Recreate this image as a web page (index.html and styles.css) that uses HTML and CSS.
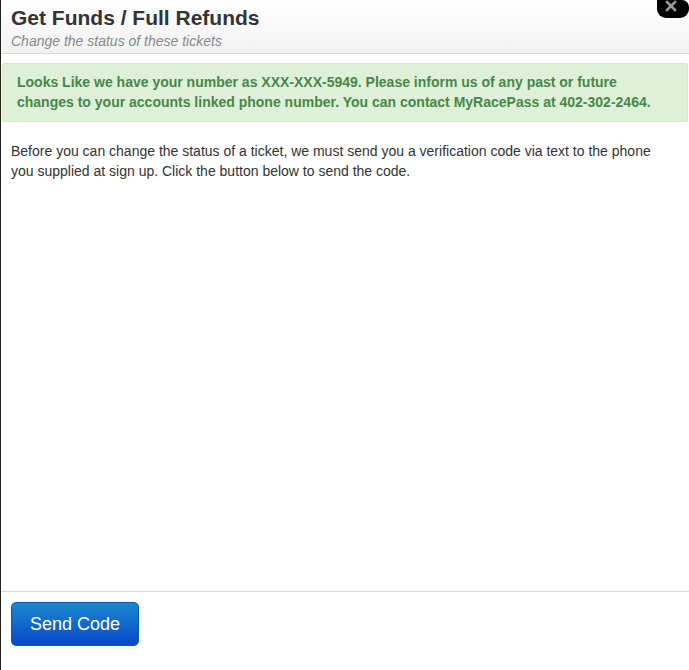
FILE: index.html
```html
<!DOCTYPE html>
<html lang="en">
<head>
    <meta charset="UTF-8">
    <title>Get Funds / Full Refunds</title>
    <link rel="stylesheet" href="styles.css">
</head>
<body>
    <div class="modal">
        <button class="close-btn" aria-label="Close">
            <svg width="32" height="18" viewBox="0 0 32 18">
                <path d="M10 2 L18 10 M18 2 L10 10" stroke="#9a9a9a" stroke-width="2.6" stroke-linecap="square"/>
            </svg>
        </button>
        <header class="modal-header">
            <h3>Get Funds / Full Refunds</h3>
            <p class="subtitle">Change the status of these tickets</p>
        </header>
        <div class="alert-success">
            Looks Like we have your number as XXX-XXX-5949. Please inform us of any past or future changes to your accounts linked phone number. You can contact MyRacePass at 402-302-2464.
        </div>
        <div class="modal-body">
            <p>Before you can change the status of a ticket, we must send you a verification code via text to the phone you supplied at sign up. Click the button below to send the code.</p>
        </div>
        <footer class="modal-footer">
            <button class="btn-primary">Send Code</button>
        </footer>
    </div>
</body>
</html>
```

FILE: styles.css
```css
body {
    margin: 0;
    padding: 0;
    font-family: "Liberation Sans", Arial, sans-serif;
    background-color: #fff;
    overflow: hidden;
}

.modal {
    position: relative;
    height: 670px;
    border-left: 1px solid #222;
    display: flex;
    flex-direction: column;
    box-sizing: border-box;
}

.close-btn {
    position: absolute;
    top: 0;
    right: 0;
    width: 32px;
    height: 18px;
    padding: 0;
    border: none;
    border-radius: 0 7px 9px 9px;
    background-color: #000;
    cursor: pointer;
}

.close-btn svg {
    display: block;
}

.modal-header {
    padding: 6px 10px 0 10px;
    height: 54px;
    box-sizing: border-box;
    background: linear-gradient(#ffffff, #f2f2f2);
    border-bottom: 1px solid #d8d8d8;
}

.modal-header h3 {
    margin: 0;
    font-size: 21px;
    line-height: 24px;
    color: #333;
}

.subtitle {
    margin: 3px 0 0 0;
    font-size: 14px;
    font-style: italic;
    color: #888;
}

.alert-success {
    margin: 9px 1px 0 1px;
    padding: 8px 14px 9px 14px;
    background-color: #dff0d8;
    border: 1px solid #d6e9c6;
    border-radius: 2px;
    color: #468847;
    font-size: 14px;
    font-weight: bold;
    line-height: 20px;
}

.modal-body {
    flex-grow: 1;
    padding: 19px 30px 18px 10px;
}

.modal-body p {
    margin: 0;
    font-size: 14px;
    line-height: 20px;
    color: #333;
}

.modal-footer {
    border-top: 1px solid #d8d8d8;
    padding: 10px 10px 24px 10px;
}

.btn-primary {
    width: 128px;
    height: 44px;
    border: 1px solid #0a55b8;
    border-radius: 5px;
    background: linear-gradient(#1a88d0, #0848c8);
    color: #fff;
    font-size: 18px;
    font-family: "Liberation Sans", Arial, sans-serif;
    cursor: pointer;
}
```
